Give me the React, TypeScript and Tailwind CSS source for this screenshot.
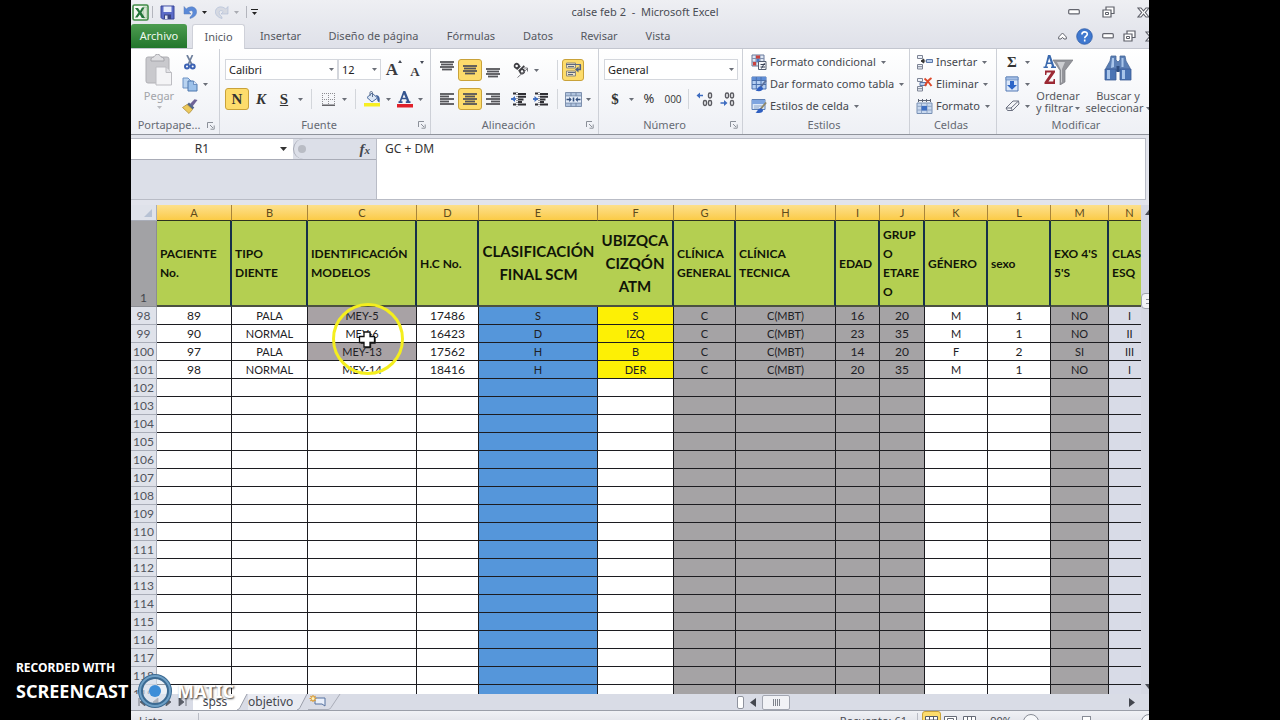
import React from "react";

type Kids = { children?: React.ReactNode };

/* ---------- small drawing helpers ---------- */

function Caret({ className = "text-[#6a6e77]" }: { className?: string }) {
  return (
    <svg width="5" height="3" viewBox="0 0 5 3" className={`shrink-0 ${className}`} aria-hidden="true">
      <path d="M0 0h5L2.500 3z" fill="currentColor" />
    </svg>
  );
}

function Sep() {
  return <span className="h-5 w-px shrink-0 bg-[#d3d6db]" />;
}

function Tool({ label, width = "w-[22px]", active = false, children }: Kids & { label: string; width?: string; active?: boolean }) {
  const look = active ? "rounded-[3px] border border-[#c9a23a] bg-[#fddc6c]" : "";
  return (
    <button type="button" aria-label={label} className={`flex h-[22px] shrink-0 items-center justify-center text-[#333] ${width} ${look}`}>
      {children}
    </button>
  );
}

/* Horizontal text lines for the alignment icons: [x, width] per line */
function Lines({ rows }: { rows: [number, number][] }) {
  const height = rows.length * 2.5;
  return (
    <svg width="14" height={Math.ceil(height)} viewBox={`0 0 14 ${Math.ceil(height)}`} aria-hidden="true">
      {rows.map(([x, w], i) => (
        <path key={i} d={`M${x} ${i * 2.5 + 1}h${w}`} stroke="#55555a" strokeWidth="1.800" />
      ))}
    </svg>
  );
}

function ExcelLogo() {
  return (
    <svg width="17" height="17" viewBox="0 0 17 17" aria-hidden="true">
      <rect x="1" y="1" width="15" height="15" rx="1.500" fill="#f4f8f2" stroke="#3f8a45" strokeWidth="1.600" />
      <path d="M11 3h4v11h-4z" fill="#d7e6d4" stroke="#7fae80" strokeWidth=".6" />
      <path d="M3 4h3l2 3 2-3.500h2.500L9.500 8.500 13 14h-3.200L7.800 10.500 5.500 13.500H3l3.400-5z" fill="#23743a" />
    </svg>
  );
}

function SaveIcon() {
  return (
    <svg width="15" height="15" viewBox="0 0 15 15" aria-hidden="true">
      <path d="M1 1h13v13H2.500L1 12.500z" fill="#5c6cc8" stroke="#3a4798" />
      <path d="M3.500 1.500h8v5.500h-8z" fill="#e8edfa" />
      <path d="M4 9.500h7v4.500H4z" fill="#3a4480" />
      <path d="M5 10.500h2.500v3.500H5z" fill="#e3e7f5" />
    </svg>
  );
}

function UndoIcon({ fill, flip = false }: { fill: string; flip?: boolean }) {
  return (
    <svg width="14" height="14" viewBox="0 0 14 14" className={flip ? "-scale-x-100" : ""} aria-hidden="true">
      <path d="M1 1.500v7.500h7L5.800 6.800C7.200 5.200 9.800 5.200 9.800 7.400c0 1.800-1.200 3.400-2.800 4.600v1.500c4-1 6.600-3.400 6.600-6.700C13.600 1.700 7 .2 3.300 4z" fill={fill} stroke="#5f7fb8" strokeWidth=".5" />
    </svg>
  );
}

function MinGlyph() {
  return (
    <svg width="12" height="6" viewBox="0 0 12 6" aria-hidden="true">
      <rect x=".7" y=".7" width="10.600" height="4.200" rx="1" fill="#fff" stroke="#63656e" strokeWidth="1.200" />
    </svg>
  );
}

function RestoreGlyph() {
  return (
    <svg width="13" height="12" viewBox="0 0 13 12" aria-hidden="true">
      <path d="M4 1h8v6.500H4z" fill="#fff" stroke="#5d5f68" strokeWidth="1.200" />
      <path d="M1 4h8v7H1z" fill="#fff" stroke="#5d5f68" strokeWidth="1.200" />
      <path d="M3.500 6.500h3v2h-3z" fill="none" stroke="#5d5f68" />
    </svg>
  );
}

function CloseGlyph() {
  return (
    <svg width="13" height="11" viewBox="0 0 13 11" aria-hidden="true">
      <path d="M1 1h3l2.500 2.800L9 1h3L8.300 5.500 12 10H9L6.500 7.200 4 10H1l3.700-4.500z" fill="#fff" stroke="#5d5f68" strokeWidth="1.100" />
    </svg>
  );
}

function HelpIcon() {
  return (
    <svg width="17" height="17" viewBox="0 0 17 17" aria-hidden="true">
      <circle cx="8.500" cy="8.500" r="7.800" fill="#3f78cf" stroke="#2f5da8" strokeWidth=".8" />
      <path d="M5.900 6.600c0-3.600 5.400-3.500 5.400-.3 0 1.900-2.600 1.900-2.600 4M8.700 11.600v1.800" fill="none" stroke="#fff" strokeWidth="1.600" />
    </svg>
  );
}

function PasteIcon() {
  return (
    <svg width="28" height="32" viewBox="0 0 28 32" aria-hidden="true">
      <rect x="1" y="3" width="23" height="26" rx="2" fill="#c9c9cd" stroke="#b0b0b5" />
      <path d="M6 5c0-2 3-1 4-3.500C11-.2 14-.2 15 1.500 16 4 19 3 19 5v2H6z" fill="#dedee1" stroke="#a6a6ab" />
      <path d="M11 13h10l5.500 5.500V31H11z" fill="#f4f4f6" stroke="#bcbcc1" />
      <path d="M21 13v5.500h5.500" fill="#e2e2e6" stroke="#bcbcc1" />
    </svg>
  );
}

function CutIcon() {
  return (
    <svg width="12" height="15" viewBox="0 0 12 15" aria-hidden="true">
      <path d="M3 0l4.800 9.500M8.500 0L4.200 9.500" stroke="#6e7f9c" strokeWidth="1.700" />
      <circle cx="3" cy="11.500" r="2" fill="none" stroke="#3c62b4" strokeWidth="2" />
      <circle cx="8.700" cy="11.500" r="2" fill="none" stroke="#3c62b4" strokeWidth="2" />
    </svg>
  );
}

function CopyIcon() {
  return (
    <svg width="16" height="15" viewBox="0 0 16 15" aria-hidden="true">
      <path d="M1 1h5l3 3v7H1z" fill="#b9d3f0" stroke="#6d92c4" />
      <path d="M6 4h5.500L15 7.500V14H6z" fill="#9cc1ea" stroke="#4d76ad" />
      <path d="M11.500 4v3.500H15" fill="#dfeafa" stroke="#4d76ad" strokeWidth=".7" />
    </svg>
  );
}

function BrushIcon() {
  return (
    <svg width="16" height="15" viewBox="0 0 16 15" aria-hidden="true">
      <path d="M15.500 1L12.500.2 8 5l2.500 2.500z" fill="#6f6398" />
      <path d="M7 3.500l5.300 5-1.800 2-5.600-5z" fill="#55678a" />
      <path d="M5 5.500L.5 8.500 7 14.500l3.500-4z" fill="#ecc95c" stroke="#b0903c" strokeWidth=".8" />
    </svg>
  );
}

function BorderIcon() {
  return (
    <svg width="13" height="13" viewBox="0 0 13 13" aria-hidden="true">
      <path d="M.5 0v12M6.500 0v12M12.500 0v12M0 .5h13M0 6.500h13" stroke="#8d8d92" strokeDasharray="1 1" />
      <path d="M0 12.200h13" stroke="#4a4a4e" strokeWidth="1.300" />
    </svg>
  );
}

function FillIcon() {
  return (
    <svg width="17" height="16" viewBox="0 0 17 16" aria-hidden="true">
      <path d="M3 6.500L8 2l5.500 5-5.500 4z" fill="#dbe6f5" stroke="#4b6c9e" />
      <path d="M6 5V1.500C6 .2 8.500.2 8.500 1.500V6" fill="none" stroke="#5b6f8f" />
      <path d="M11.500 4c4 0 4.800 3.500 4 7.500C13.500 11 12.700 8.500 13.500 7z" fill="#41629c" />
      <path d="M0 12h16v3.500H0z" fill="#f7ee22" />
    </svg>
  );
}

function FontColorIcon() {
  return (
    <svg width="17" height="17" viewBox="0 0 17 17" aria-hidden="true">
      <path d="M7.300 0h2l4.200 10.200h1V12H9.800v-1.800h1.100l-.7-2H6l-.8 2h1.300V12H2.500v-1.800h1zM8 3.200L6.600 6.700h3z" fill="#34548f" />
      <path d="M1 13h16v3.500H1z" fill="#e0202a" />
    </svg>
  );
}

function SizeIcon({ grow }: { grow: boolean }) {
  return (
    <span className="flex items-start font-['Liberation_Serif',serif] font-bold text-[#3b3b3f]">
      <span className={grow ? "text-[17px] leading-5" : "pt-1 text-[13px] leading-4"}>A</span>
      <svg width="4" height="4" viewBox="0 0 4 4" className={grow ? "" : "rotate-180"} aria-hidden="true">
        <path d="M0 3L2 0l2 3z" fill="#454a55" />
      </svg>
    </span>
  );
}

function OrientationIcon() {
  return (
    <svg width="17" height="16" viewBox="0 0 17 16" aria-hidden="true">
      <g transform="rotate(45 7 7)">
        <circle cx="3.200" cy="6.500" r="2.100" fill="none" stroke="#3f3f44" strokeWidth="1.700" />
        <path d="M5.700 4v5M8.500 1v8" stroke="#3f3f44" strokeWidth="1.700" />
        <circle cx="10.800" cy="6.500" r="2.100" fill="none" stroke="#3f3f44" strokeWidth="1.700" />
      </g>
      <path d="M5.500 15.500L15 7M15.500 6v3.500M15.500 6H12" stroke="#77777d" fill="none" />
    </svg>
  );
}

function WrapIcon() {
  return (
    <svg width="17" height="16" viewBox="0 0 17 16" aria-hidden="true">
      <path d="M1.500 1h9v5h-9zM1.500 9h9v5h-9z" fill="#ece3c8" stroke="#8f8a78" />
      <path d="M1 2.500h15M3 4.500h6M3 10.500h7M3 12.500h5" stroke="#5f6a80" strokeWidth="1.200" />
      <path d="M15.300 3v4.500H12" fill="none" stroke="#4d5f86" strokeWidth="1.600" />
      <path d="M13.500 4.500v6L10 7.500z" fill="#4d5f86" />
    </svg>
  );
}

function IndentIcon({ out = false }: { out?: boolean }) {
  return (
    <svg width="16" height="15" viewBox="0 0 16 15" aria-hidden="true">
      <path d="M2 1.500h3M7 2h8M7 4.800h8M7 7.500h5.500M7 10h4M7 12.500h8M2 12.500h3" stroke="#2f2f34" strokeWidth="2" />
      <path d="M6 0v14.500" stroke="#3f3f44" strokeDasharray="1 1" />
      <path d={out ? "M4 4v6L.5 7z" : "M1.500 4v6L5 7z"} fill="#3d6cc0" />
      <path d="M0 7h5" stroke="#3d6cc0" strokeWidth="1.800" />
    </svg>
  );
}

function MergeIcon() {
  return (
    <svg width="17" height="15" viewBox="0 0 17 15" aria-hidden="true">
      <path d="M.5.5h16v14H.5z" fill="#b0c3de" stroke="#7f91ae" />
      <path d="M.5 4h16M.5 11h16M6 .5V4M11 .5V4M6 11v3.500M11 11v3.500" stroke="#7588a6" />
      <path d="M1 4.500h15v6H1z" fill="#e6eefa" />
      <path d="M1.500 7.500h4M11.500 7.500h4" stroke="#35507e" strokeWidth="1.600" />
      <path d="M4.200 5v5l2.500-2.500zM12.800 5v5l-2.500-2.500z" fill="#35507e" />
      <path d="M8.500 5.500v4" stroke="#35507e" strokeWidth="1.600" />
    </svg>
  );
}

function DecimalsIcon({ more }: { more: boolean }) {
  return (
    <svg width="18" height="15" viewBox="0 0 18 15" aria-hidden="true">
      <g fill="none" stroke="#5a5a60" strokeWidth="1.400">
        {!more && <rect x="7.500" y="1" width="3" height="5" rx="1.400" />}
        <rect x="12.500" y="1" width="3" height="5" rx="1.400" />
        <rect x="12.500" y="8.500" width="3" height="5" rx="1.400" />
        {more && <rect x="7.500" y="8.500" width="3" height="5" rx="1.400" />}
      </g>
      {more ? (
        <path d="M.5 3.500L4 .5v2.200h3v1.600H4v2.200z" fill="#3d6cc0" />
      ) : (
        <path d="M9.500 11L6 8v2.200H2.500v1.600H6V14z" fill="#3d6cc0" />
      )}
    </svg>
  );
}

function ConditionalIcon() {
  return (
    <svg width="16" height="16" viewBox="0 0 16 16" aria-hidden="true">
      <path d="M1 1h12v11H1z" fill="#dfe6f3" stroke="#66789b" />
      <path d="M1 4.500h12M1 8h12M5 1v11M9 1v11" stroke="#8190ae" />
      <path d="M5 1.500h4v3H5zM2 8h3v3.500H2z" fill="#c9423f" />
      <path d="M5.500 5h3v3h-3z" fill="#4c78c8" />
      <path d="M7.500 7.500H15v8H7.500z" fill="#f5f7fb" stroke="#525c70" />
      <path d="M9.500 10.500h4.500M9.500 13h4.500M13.500 9l-3 5.500" stroke="#3b4458" />
    </svg>
  );
}

function TableFormatIcon() {
  return (
    <svg width="16" height="16" viewBox="0 0 16 16" aria-hidden="true">
      <path d="M1 1h14v12H1z" fill="#b5cff2" stroke="#4a70ad" />
      <path d="M1 1h14v3H1z" fill="#5f8ed6" />
      <path d="M1 4.500h14M1 8.500h14M5.300 1v12M10 1v12" stroke="#4a70ad" />
      <path d="M15.800 5L10 12l-1.500-1L14.500 4z" fill="#5b6f99" />
      <path d="M10 10.300c-3.200 0-3 3-5.500 4.200 3.500 1.500 8 .5 7.500-2.500z" fill="#2f5fc0" />
    </svg>
  );
}

function CellStyleIcon() {
  return (
    <svg width="16" height="16" viewBox="0 0 16 16" aria-hidden="true">
      <path d="M1 1.500h13v10H1z" fill="#dce8f8" stroke="#5d7fb4" />
      <path d="M1 2h13v4H1z" fill="#7fa5e0" />
      <path d="M3 8h8M3 10h5" stroke="#8ca6cc" />
      <path d="M15.800 5L10 12l-1.500-1L14.300 4z" fill="#8d8668" />
      <path d="M10 10.300c-3.200 0-3 3-5.500 4.200 3.500 1.200 8 .5 7.500-2.500z" fill="#2f5fc0" />
    </svg>
  );
}

function InsertCellsIcon() {
  return (
    <svg width="17" height="15" viewBox="0 0 17 15" aria-hidden="true">
      <path d="M1.500.5h5v3h-5zM1.500 9.500h5v4.500h-5zM1.500 11.700h5" fill="#eef2f9" stroke="#7c8394" />
      <path d="M10.500 4.500h6v3h-6z" fill="#bcd0ee" stroke="#5b77a8" />
      <path d="M9.500 6H6M7.800 4v4L5 6z" stroke="#333" strokeWidth="1" fill="#333" />
    </svg>
  );
}

function DeleteCellsIcon() {
  return (
    <svg width="17" height="15" viewBox="0 0 17 15" aria-hidden="true">
      <path d="M1.500 1.500h5v3h-5zM1.500 9.500h5v4.500h-5zM1.500 11.700h5" fill="#eef2f9" stroke="#7c8394" />
      <path d="M4 5.500h6v3H4z" fill="#bcd0ee" stroke="#5b77a8" />
      <path d="M8.500 1.500c2 1.500 5 4.500 7 7.500M15.500 1c-2.500 1.500-5 4.500-6.500 8" stroke="#dd4a2c" strokeWidth="2" fill="none" />
    </svg>
  );
}

function FormatCellsIcon() {
  return (
    <svg width="17" height="15" viewBox="0 0 17 15" aria-hidden="true">
      <path d="M2.500 0v3M2.500 1.500h12M14.500 0v3M6.500 0v3M10.500 0v3" stroke="#5c6475" fill="none" />
      <path d="M1 4h15v10.500H1z" fill="#c9d9ef" stroke="#7890b4" />
      <path d="M1 7.300h15M1 11h15M5.500 4v10.500M11 4v10.500" stroke="#8fa4c4" />
      <path d="M5.500 7h5.500v4.500H5.500z" fill="#3e6fc2" />
    </svg>
  );
}

function FillDownIcon() {
  return (
    <svg width="14" height="16" viewBox="0 0 14 16" aria-hidden="true">
      <path d="M1 1h12v14H1z" fill="#dbe7f9" stroke="#5278b4" />
      <path d="M1 1h12v3H1z" fill="#a5bfe6" stroke="#5278b4" strokeWidth=".6" />
      <path d="M5 5h4v4h3L7 13.800 2 9h3z" fill="#2d66c8" />
    </svg>
  );
}

function EraserIcon() {
  return (
    <svg width="15" height="12" viewBox="0 0 15 12" aria-hidden="true">
      <path d="M1 8l7-7h5.500L14 4l-6.500 6.500H2.500z" fill="#f3f4f7" stroke="#6b7080" />
      <path d="M1 8h5l7.500-7M6 8l1.500 2.500" fill="none" stroke="#6b7080" />
    </svg>
  );
}

function SortFilterIcon() {
  return (
    <svg width="30" height="30" viewBox="0 0 30 30" aria-hidden="true">
      <path d="M10 5h20l-8 10.500V27l-5 3V15.500z" fill="#94959b" stroke="#7a7b82" strokeWidth=".7" />
      <path d="M14 7h8l-3 7v13l-1 1V15z" fill="#cdced2" />
      <path d="M5 0h2.400l4 11.500H13V13H8v-1.500h1L8.200 9H4.400l-.8 2.500h1.300V13H.5v-1.500H2zM6.200 3L4.800 7.400h2.900z" fill="#3a69ae" />
      <path d="M2 15.500h10v1.800L5.500 26.500h4.700l.4-2.500H12v5H1.500v-1.800l6.700-9.700H3.700L3.300 20H2z" fill="#9c2934" />
    </svg>
  );
}

function BinocularsIcon() {
  return (
    <svg width="28" height="26" viewBox="0 0 28 26" aria-hidden="true">
      <path d="M7 1h5v4l2 2 2-2V1h5l1 5 4 7v3H2v-3l4-7z" fill="#5b7fb5" stroke="#47689b" strokeWidth=".8" />
      <path d="M1 14h11v11H1zM16 14h11v11H16z" fill="#4b74b4" stroke="#3a5c94" strokeWidth=".8" />
      <path d="M3 15h3v9H3zM18 15h3v9h-3zM8 3h2v9l-3 1zM17.500 3h2v9h-2z" fill="#a9c5ea" />
      <path d="M12.500 11h3v6h-3z" fill="#2f4f82" />
    </svg>
  );
}

function Launcher() {
  return (
    <svg width="8" height="8" viewBox="0 0 8 8" aria-hidden="true">
      <path d="M.5 6V.5H6M3 3l3 3M7.200 3.500v3.700H3.500" fill="none" stroke="#8b9099" />
    </svg>
  );
}

/* ---------- ribbon ---------- */

function Group({ title, width, launcher = true, children }: Kids & { title: string; width: string; launcher?: boolean }) {
  return (
    <section aria-label={title} className={`flex shrink-0 flex-col border-r border-[#cdd0d7] ${width}`}>
      <div className="flex-1">{children}</div>
      <div className="flex h-[18px] items-center pr-1 text-[#666a73]">
        <span className="flex-1 text-center">{title}</span>
        {launcher && (
          <button type="button" aria-label={`Opciones de ${title}`}>
            <Launcher />
          </button>
        )}
      </div>
    </section>
  );
}

function Combo({ label, value, width }: { label: string; value: string; width: string }) {
  return (
    <div className={`relative shrink-0 ${width}`}>
      <select aria-label={label} defaultValue={value} className="block h-[21px] w-full appearance-none border border-[#d4d7dd] bg-white pl-[3px] text-[11px] leading-[19px] text-[#222]">
        <option>{value}</option>
      </select>
      <span className="pointer-events-none absolute top-[9px] right-1">
        <Caret />
      </span>
    </div>
  );
}

function TextTool({ icon, text }: { icon: React.ReactNode; text: string }) {
  return (
    <button type="button" className="flex h-[22px] items-center gap-[3px] whitespace-nowrap text-[#44474e]">
      {icon}
      {text}
      <Caret className="ml-0.5 text-[#6a6e77]" />
    </button>
  );
}

const BLOCK: [number, number][] = [[0, 14], [1, 12], [0, 14], [2, 10]];
const LEFT: [number, number][] = [[0, 14], [0, 9], [0, 14], [0, 9], [0, 14]];
const CENTER: [number, number][] = [[0, 14], [2, 10], [0, 14], [2, 10], [0, 14]];
const RIGHT: [number, number][] = [[0, 14], [5, 9], [0, 14], [5, 9], [0, 14]];

function Ribbon() {
  return (
    <div className="flex h-[86px] shrink-0 border-b border-[#8f939b] bg-linear-to-b from-white to-[#eef0f5]">
      <Group title="Portapape..." width="w-[89px]">
        <div className="flex pt-0.5 pl-2">
          <button type="button" className="flex w-[40px] flex-col items-center pt-[3px] text-[#a2a4a9]">
            <PasteIcon />
            <span className="leading-5">Pegar</span>
            <Caret className="text-[#b9bbc0]" />
          </button>
          <div className="flex flex-col">
            <Tool label="Cortar"><CutIcon /></Tool>
            <div className="flex">
              <Tool label="Copiar"><CopyIcon /></Tool>
              <Tool label="Opciones de copiar" width="w-2"><Caret /></Tool>
            </div>
            <Tool label="Copiar formato"><BrushIcon /></Tool>
          </div>
        </div>
      </Group>

      <Group title="Fuente" width="w-[211px]">
        <div className="flex flex-col gap-2 pt-[10px] pl-[5px]">
          <div className="flex h-[21px] items-center">
            <Combo label="Fuente" value="Calibri" width="w-[113px]" />
            <Combo label="Tamaño de fuente" value="12" width="w-[43px]" />
            <Tool label="Aumentar tamaño" width="w-[26px]"><SizeIcon grow /></Tool>
            <Tool label="Disminuir tamaño" width="w-[20px]"><SizeIcon grow={false} /></Tool>
          </div>
          <div className="flex items-center font-['Liberation_Serif',serif] text-[15px] font-bold">
            <Tool label="Negrita" width="w-6" active>N</Tool>
            <Tool label="Cursiva" width="w-6"><i>K</i></Tool>
            <Tool label="Subrayado"><u>S</u></Tool>
            <Tool label="Opciones de subrayado" width="w-[10px]"><Caret /></Tool>
            <span className="w-[6px]" />
            <Sep />
            <span className="w-[5px]" />
            <Tool label="Bordes"><BorderIcon /></Tool>
            <Tool label="Opciones de bordes" width="w-[10px]"><Caret /></Tool>
            <span className="w-[6px]" />
            <Sep />
            <span className="w-[5px]" />
            <Tool label="Color de relleno"><FillIcon /></Tool>
            <Tool label="Opciones de relleno" width="w-[10px]"><Caret /></Tool>
            <Tool label="Color de fuente"><FontColorIcon /></Tool>
            <Tool label="Opciones de color" width="w-[10px]"><Caret /></Tool>
          </div>
        </div>
      </Group>

      <Group title="Alineación" width="w-[168px]">
        <div className="flex flex-col gap-[7px] pt-[10px] pl-[5px]">
          <div className="flex items-center">
            <Tool label="Alinear arriba"><span className="pb-2"><Lines rows={BLOCK} /></span></Tool>
            <Tool label="Alinear en medio" width="w-6" active><Lines rows={BLOCK} /></Tool>
            <Tool label="Alinear abajo"><span className="pt-[6px]"><Lines rows={BLOCK} /></span></Tool>
            <span className="w-1" />
            <Tool label="Orientación" width="w-6"><OrientationIcon /></Tool>
            <Tool label="Opciones de orientación" width="w-2"><Caret /></Tool>
            <span className="w-[17px]" />
            <Sep />
            <span className="w-1" />
            <Tool label="Ajustar texto" active><WrapIcon /></Tool>
          </div>
          <div className="flex items-center">
            <Tool label="Alinear a la izquierda"><Lines rows={LEFT} /></Tool>
            <Tool label="Centrar" width="w-6" active><Lines rows={CENTER} /></Tool>
            <Tool label="Alinear a la derecha"><Lines rows={RIGHT} /></Tool>
            <span className="w-1" />
            <Tool label="Disminuir sangría"><IndentIcon out /></Tool>
            <Tool label="Aumentar sangría"><IndentIcon /></Tool>
            <span className="w-[5px]" />
            <Sep />
            <span className="w-1" />
            <Tool label="Combinar y centrar"><MergeIcon /></Tool>
            <Tool label="Opciones de combinar" width="w-2"><Caret /></Tool>
          </div>
        </div>
      </Group>

      <Group title="Número" width="w-[144px]">
        <div className="flex flex-col gap-2 pt-[10px] pl-[5px]">
          <Combo label="Formato de número" value="General" width="w-[134px]" />
          <div className="flex items-center">
            <Tool label="Moneda"><b className="font-['Liberation_Serif',serif] text-[15px]">$</b></Tool>
            <Tool label="Opciones de moneda" width="w-[10px]"><Caret /></Tool>
            <Tool label="Porcentaje" width="w-[26px]"><span className="text-[13px]">%</span></Tool>
            <Tool label="Millares"><span className="font-['Open_Sans',sans-serif] text-[10px]">000</span></Tool>
            <span className="w-1" />
            <Sep />
            <span className="w-[5px]" />
            <Tool label="Aumentar decimales"><DecimalsIcon more /></Tool>
            <Tool label="Disminuir decimales"><DecimalsIcon more={false} /></Tool>
          </div>
        </div>
      </Group>

      <Group title="Estilos" width="w-[167px]" launcher={false}>
        <div className="flex flex-col pt-0.5 pl-2">
          <TextTool icon={<ConditionalIcon />} text="Formato condicional" />
          <TextTool icon={<TableFormatIcon />} text="Dar formato como tabla" />
          <TextTool icon={<CellStyleIcon />} text="Estilos de celda" />
        </div>
      </Group>

      <Group title="Celdas" width="w-[87px]" launcher={false}>
        <div className="flex flex-col pt-0.5 pl-[6px]">
          <TextTool icon={<InsertCellsIcon />} text="Insertar" />
          <TextTool icon={<DeleteCellsIcon />} text="Eliminar" />
          <TextTool icon={<FormatCellsIcon />} text="Formato" />
        </div>
      </Group>

      <Group title="Modificar" width="w-[163px]" launcher={false}>
        <div className="flex pt-0.5 pl-1">
          <div className="flex flex-col">
            <div className="flex">
              <Tool label="Autosuma"><b className="font-['Liberation_Serif',serif] text-[15px]">Σ</b></Tool>
              <Tool label="Opciones de autosuma" width="w-2"><Caret /></Tool>
            </div>
            <div className="flex">
              <Tool label="Rellenar"><FillDownIcon /></Tool>
              <Tool label="Opciones de rellenar" width="w-2"><Caret /></Tool>
            </div>
            <div className="flex">
              <Tool label="Borrar"><EraserIcon /></Tool>
              <Tool label="Opciones de borrar" width="w-2"><Caret /></Tool>
            </div>
          </div>
          <button type="button" className="flex w-[54px] flex-col items-center pt-1 leading-3 text-[#555860]">
            <SortFilterIcon />
            <span className="pt-[5px]">Ordenar</span>
            <span className="flex items-center gap-0.5 whitespace-nowrap">y filtrar <Caret /></span>
          </button>
          <button type="button" className="flex w-[66px] flex-col items-center pt-1 leading-3 text-[#555860]">
            <BinocularsIcon />
            <span className="pt-[9px]">Buscar y</span>
            <span className="flex items-center gap-0.5 whitespace-nowrap">seleccionar <Caret /></span>
          </button>
        </div>
      </Group>
    </div>
  );
}

/* ---------- title, tabs, formula bar ---------- */

const TABS: [string, string][] = [
  ["Insertar", "w-[65px]"],
  ["Diseño de página", "w-[121px]"],
  ["Fórmulas", "w-[74px]"],
  ["Datos", "w-[60px]"],
  ["Revisar", "w-[62px]"],
  ["Vista", "w-[56px]"],
];

function Header() {
  return (
    <header className="shrink-0 border-b border-[#c3c6cf] bg-linear-to-b from-[#eeeff3] to-[#dfe1e9]">
      <div className="flex h-6 items-center">
        <div className="flex flex-1 items-center pl-px">
          <ExcelLogo />
          <span className="mr-[7px] ml-[3px] h-3 w-px bg-[#b3b5bd]" />
          <button type="button" aria-label="Guardar"><SaveIcon /></button>
          <button type="button" aria-label="Deshacer" className="ml-2"><UndoIcon fill="#5b8ad8" /></button>
          <button type="button" aria-label="Opciones de deshacer" className="ml-[5px]"><Caret className="text-[#222]" /></button>
          <button type="button" aria-label="Rehacer" className="ml-2 opacity-50"><UndoIcon fill="#c2c8d4" flip /></button>
          <button type="button" aria-label="Opciones de rehacer" className="ml-[5px]"><Caret className="text-[#a9abb2]" /></button>
          <span className="mr-1 ml-[7px] h-3 w-px bg-[#b3b5bd]" />
          <button type="button" aria-label="Personalizar barra" className="flex flex-col items-center gap-0.5">
            <span className="h-px w-[7px] bg-[#222]" />
            <Caret className="text-[#222]" />
          </button>
        </div>
        <h1 className="whitespace-pre text-[#4a4d55]">calse feb 2  -  Microsoft Excel</h1>
        <div className="flex flex-1 items-center justify-end gap-[22px]">
          <button type="button" aria-label="Minimizar"><MinGlyph /></button>
          <button type="button" aria-label="Restaurar"><RestoreGlyph /></button>
          <button type="button" aria-label="Cerrar" className="mr-2"><CloseGlyph /></button>
        </div>
      </div>
      <nav className="flex h-6 items-end text-[#55585f]">
        <button type="button" className="h-6 w-14 rounded-t-[3px] bg-linear-to-b from-[#4c9c50] to-[#22762c] text-[#eef8ee]">Archivo</button>
        <button type="button" className="-mb-px ml-[5px] h-[25px] w-[53px] rounded-t-[3px] border border-b-0 border-[#cfd1d9] bg-white">Inicio</button>
        <span className="w-[3px]" />
        {TABS.map(([name, width]) => (
          <button key={name} type="button" className={`h-6 text-center whitespace-nowrap ${width}`}>{name}</button>
        ))}
        <div className="flex h-6 flex-1 items-center justify-end gap-[9px]">
          <button type="button" aria-label="Minimizar la cinta">
            <svg width="9" height="8" viewBox="0 0 9 8" aria-hidden="true">
              <path d="M.7 5L4.500 1l3.800 4v2H6L4.500 5.300 3 7H.7z" fill="#fff" stroke="#63656e" />
            </svg>
          </button>
          <button type="button" aria-label="Ayuda"><HelpIcon /></button>
          <button type="button" aria-label="Minimizar libro"><MinGlyph /></button>
          <button type="button" aria-label="Restaurar libro"><RestoreGlyph /></button>
          <button type="button" aria-label="Cerrar libro"><CloseGlyph /></button>
        </div>
      </nav>
    </header>
  );
}

function FormulaBar() {
  return (
    <div className="flex h-[70px] shrink-0 bg-[#e2e4ec] pt-[3px] pb-[5px]">
      <div className="flex w-[246px] shrink-0 flex-col border border-l-0 border-[#b9bcc6] bg-[#dcdfe8]">
        <div className="flex h-[21px] border-b border-[#a9acb7]">
          <input aria-label="Cuadro de nombres" defaultValue="R1" className="w-[142px] bg-white text-center text-[12px] text-[#333]" />
          <button type="button" aria-label="Lista de nombres" className="flex w-[20px] items-center justify-center bg-white">
            <svg width="7" height="4" viewBox="0 0 7 4" aria-hidden="true"><path d="M0 0h7L3.500 4z" fill="#333" /></svg>
          </button>
          <div className="flex flex-1 items-center justify-between rounded-l-full border-l border-[#a9acb7] pr-[6px] pl-1">
            <span className="size-2 rounded-full bg-[#b9bcc4]" />
            <button type="button" aria-label="Insertar función" className="font-['Liberation_Serif',serif] text-[15px] leading-4 font-bold text-[#44474e] italic">
              f<span className="text-[11px]">x</span>
            </button>
          </div>
        </div>
      </div>
      <textarea aria-label="Barra de fórmulas" defaultValue="GC + DM" className="min-w-0 flex-1 resize-none border-y border-[#b9bcc6] bg-white px-2 py-px text-[12px] leading-[18px] text-[#333]" />
      <div className="w-[13px] shrink-0 border-l border-[#b9bcc6]" />
    </div>
  );
}

/* ---------- spreadsheet ---------- */

const WHITE = "bg-white";
const GREY = "bg-[#a5a3a5]";
const BLUE = "bg-[#5596da]";
const PALE = "bg-[#d8dbe7]";

type Column = { id: string; col: string; title: string; fill: string; big?: boolean };

const COLUMNS: Column[] = [
  { id: "A", col: "w-[75px]", title: "PACIENTE\nNo.", fill: WHITE },
  { id: "B", col: "w-[76px]", title: "TIPO\nDIENTE", fill: WHITE },
  { id: "C", col: "w-[109px]", title: "IDENTIFICACIÓN\nMODELOS", fill: WHITE },
  { id: "D", col: "w-[62px]", title: "H.C No.", fill: WHITE },
  { id: "E", col: "w-[119px]", title: "CLASIFICACIÓN\nFINAL SCM", fill: BLUE, big: true },
  { id: "F", col: "w-[76px]", title: "UBIZQCA\nCIZQÓN\nATM", fill: WHITE, big: true },
  { id: "G", col: "w-[62px]", title: "CLÍNICA\nGENERAL", fill: GREY },
  { id: "H", col: "w-[100px]", title: "CLÍNICA\nTECNICA", fill: GREY },
  { id: "I", col: "w-[44px]", title: "EDAD", fill: GREY },
  { id: "J", col: "w-[45px]", title: "GRUP\nO\nETARE\nO", fill: GREY },
  { id: "K", col: "w-[63px]", title: "GÉNERO", fill: WHITE },
  { id: "L", col: "w-[63px]", title: "sexo", fill: WHITE },
  { id: "M", col: "w-[58px]", title: "EXO 4'S\n5'S", fill: GREY },
  { id: "N", col: "w-[42px]", title: "CLAS\nESQ", fill: PALE },
];

const DATA: Record<number, string[]> = {
  98: ["89", "PALA", "MEY-5", "17486", "S", "S", "C", "C(MBT)", "16", "20", "M", "1", "NO", "I"],
  99: ["90", "NORMAL", "MEY-6", "16423", "D", "IZQ", "C", "C(MBT)", "23", "35", "M", "1", "NO", "II"],
  100: ["97", "PALA", "MEY-13", "17562", "H", "B", "C", "C(MBT)", "14", "20", "F", "2", "SI", "III"],
  101: ["98", "NORMAL", "MEY-14", "18416", "H", "DER", "C", "C(MBT)", "20", "35", "M", "1", "NO", "I"],
};

const ROWS = Array.from({ length: 22 }, (_, i) => 98 + i);

function cellFill(row: number, column: Column) {
  if (column.id === "F" && DATA[row]) return "bg-[#fdf005]";
  if (column.id === "C" && (row === 98 || row === 100)) return "bg-[#a8a2a5]";
  return column.fill;
}

function textSize(value?: string) {
  return value && /^\d+$/.test(value) ? "text-[12px]" : "text-[11px]";
}

function Sheet() {
  return (
    <div className="flex min-h-0 flex-1">
      <div className="min-w-0 flex-1 overflow-hidden bg-[#d8dbe7] font-[Lato,sans-serif]">
        <table className="w-[1020px] table-fixed border-separate border-spacing-0 text-[12px] leading-[14px]">
          <colgroup>
            <col className="w-[26px]" />
            {COLUMNS.map((c) => (
              <col key={c.id} className={c.col} />
            ))}
          </colgroup>
          <thead>
            <tr>
              <th aria-label="Seleccionar todo" className="h-4 border-r border-b border-[#a9adb8] bg-[#dfe2ea] p-0">
                <svg width="8" height="8" viewBox="0 0 8 8" className="mr-1 ml-auto" aria-hidden="true">
                  <path d="M8 0v8H0z" fill="#b7c2d4" />
                </svg>
              </th>
              {COLUMNS.map((c) => (
                <th key={c.id} scope="col" className="h-4 border-r border-b border-r-[#a8843a] border-b-[#2d3320] bg-linear-to-b from-[#fde08a] to-[#fbcb45] p-0 text-[11px] font-normal text-[#5d4a1c]">
                  {c.id}
                </th>
              ))}
            </tr>
          </thead>
          <tbody>
            <tr>
              <th scope="row" className="h-[86px] border-r border-b border-[#8b8d93] bg-[#a2a2a5] p-0 pb-px align-bottom font-normal text-[#44464c]">1</th>
              {COLUMNS.map((c) => (
                <td
                  key={c.id}
                  className={`h-[86px] overflow-hidden border-b-2 border-b-[#4b5140] bg-[#b4cf51] p-0 font-bold whitespace-pre text-[#111508] ${
                    c.id === "E" ? "" : "border-r-2 border-r-[#16304a]"
                  } ${c.big ? "text-center text-[15px] leading-[23px]" : "pl-[3px] text-left text-[12px] leading-[19px]"}`}
                >
                  {c.title}
                </td>
              ))}
            </tr>
            {ROWS.map((row) => (
              <tr key={row}>
                <th scope="row" className="h-[18px] border-r border-b border-[#a9adb8] bg-[#dfe2ea] p-0 font-normal text-[#50545d]">{row}</th>
                {COLUMNS.map((c, i) => (
                  <td key={c.id} className={`h-[18px] border-r border-b border-[#1c1c20] p-0 text-center text-[#202024] ${cellFill(row, c)} ${textSize(DATA[row]?.[i])}`}>
                    {DATA[row]?.[i]}
                  </td>
                ))}
              </tr>
            ))}
          </tbody>
        </table>
      </div>
      <div className="flex w-[17px] shrink-0 flex-col items-center justify-between bg-[#d5d8e3] py-1">
        <button type="button" aria-label="Subir">
          <svg width="9" height="6" viewBox="0 0 9 6" aria-hidden="true"><path d="M0 6l4.500-6L9 6z" fill="#4b4e56" /></svg>
        </button>
        <button type="button" aria-label="Desplazar" className="mt-[78px] mb-auto h-4 w-[17px] rounded-sm border border-[#9fa3ae] bg-[#f2f3f7]">
          <span className="mx-auto block h-[5px] w-2 border-y border-[#8a8e98]" />
        </button>
        <button type="button" aria-label="Bajar">
          <svg width="9" height="6" viewBox="0 0 9 6" aria-hidden="true"><path d="M0 0h9L4.500 6z" fill="#4b4e56" /></svg>
        </button>
      </div>
    </div>
  );
}

function SheetTabs() {
  return (
    <div className="flex h-4 shrink-0 bg-[#d9dce6] text-[12px] leading-4 text-[#44474e]">
      <div className="flex w-[62px] items-center justify-around px-1">
        {["M2 0v8M8 0v8L3 4z", "M7 0v8L2 4z", "M2 0v8l5-4z", "M1 0v8l5-4zM8 0v8"].map((d) => (
          <button key={d} type="button" aria-label="Desplazar hojas">
            <svg width="9" height="8" viewBox="0 0 9 8" aria-hidden="true"><path d={d} fill="#5a5e68" stroke="#5a5e68" strokeWidth=".8" /></svg>
          </button>
        ))}
      </div>
      <button type="button" className="w-[44px] bg-white text-center">spss</button>
      <svg width="11" height="16" viewBox="0 0 11 16" aria-hidden="true">
        <path d="M0 0h10L3 13.500Q1.500 16 0 16z" fill="#fff" />
        <path d="M10 0L3 13.500Q1.500 16 0 16" fill="none" stroke="#9a9eaa" />
      </svg>
      <button type="button" className="bg-[#e9ebf2] text-center">objetivo</button>
      <svg width="15" height="16" viewBox="0 0 15 16" aria-hidden="true">
        <path d="M0 0h14L7 13.500Q5.500 16 4 16H0z" fill="#e9ebf2" />
        <path d="M14 0L7 13.500Q5.500 16 4 16" fill="none" stroke="#9a9eaa" />
      </svg>
      <button type="button" aria-label="Insertar hoja de cálculo" className="w-[34px]">
        <svg width="34" height="16" viewBox="0 0 34 16" aria-hidden="true">
          <path d="M0 15.500h20q2 0 3-2L32 0" fill="none" stroke="#a9adb8" />
          <path d="M7 4h10v8l-3-2H7z" fill="#e9effa" stroke="#54709f" />
          <path d="M5 1v7M1.500 4.500h7M2.500 2l5 5M7.500 2l-5 5" stroke="#dc9a2c" strokeWidth="1.200" />
          <circle cx="5" cy="4.500" r="1.500" fill="#fff4c0" />
        </svg>
      </button>
      <div className="flex-1" />
      <div className="flex w-[421px] items-center">
        <span className="h-[13px] w-[7px] rounded-[2px] border border-[#8f939e] bg-white" />
        <button type="button" aria-label="Desplazar a la izquierda" className="ml-[6px]">
          <svg width="6" height="9" viewBox="0 0 6 9" aria-hidden="true"><path d="M6 0v9L0 4.500z" fill="#44474f" /></svg>
        </button>
        <button type="button" aria-label="Barra horizontal" className="ml-[6px] flex h-[15px] w-[28px] items-center justify-center gap-px rounded-[2px] border border-[#a2a6b1] bg-[#f1f2f6]">
          {[0, 1, 2, 3].map((n) => (
            <span key={n} className="h-[7px] w-px bg-[#7e828c]" />
          ))}
        </button>
        <span className="flex-1" />
        <button type="button" aria-label="Desplazar a la derecha" className="mr-[23px]">
          <svg width="6" height="9" viewBox="0 0 6 9" aria-hidden="true"><path d="M0 0v9l6-4.500z" fill="#44474f" /></svg>
        </button>
      </div>
    </div>
  );
}

function StatusBar() {
  return (
    <footer className="flex h-[22px] shrink-0 items-center border-t border-[#9a9ea8] bg-linear-to-b from-[#f0f1f5] to-[#d7d9e1] text-[#4a4d55]">
      <span className="w-[68px] border-r border-[#b9bcc5] pl-2">Listo</span>
      <span className="flex-1" />
      <span className="border-r border-[#b9bcc5] pr-[10px]">Recuento: 61</span>
      <div className="flex items-center pl-1">
        <Tool label="Normal" width="w-[19px]" active>
          <svg width="13" height="12" viewBox="0 0 13 12" aria-hidden="true"><path d="M.5.5h12v11H.5zM.5 4h12M.5 8h12M4.500.5v11M8.500.5v11" fill="#fff" stroke="#555a66" /></svg>
        </Tool>
        <Tool label="Diseño de página" width="w-[19px]">
          <svg width="13" height="12" viewBox="0 0 13 12" aria-hidden="true"><path d="M.5.5h12v11H.5zM3.500 2.500h6v7h-6z" fill="#fff" stroke="#666b77" /></svg>
        </Tool>
        <Tool label="Ver salto de página" width="w-[19px]">
          <svg width="13" height="12" viewBox="0 0 13 12" aria-hidden="true"><path d="M.5.5h12v11H.5zM4.500.5v6M8.500.5v6" fill="#fff" stroke="#666b77" /></svg>
        </Tool>
      </div>
      <span className="w-[44px] text-center">90%</span>
      <button type="button" aria-label="Alejar" className="size-4 rounded-full border border-[#888c96] bg-[#f7f8fa] leading-3">−</button>
      <input type="range" aria-label="Zoom" min={0} max={100} defaultValue={46} className="h-3 w-[102px] appearance-none bg-transparent [&::-webkit-slider-thumb]:h-3 [&::-webkit-slider-thumb]:w-[9px] [&::-webkit-slider-thumb]:appearance-none [&::-webkit-slider-thumb]:border [&::-webkit-slider-thumb]:border-[#888c96] [&::-webkit-slider-thumb]:bg-white" />
      <button type="button" aria-label="Acercar" className="mr-px size-4 rounded-full border border-[#888c96] bg-[#f7f8fa] leading-3">+</button>
    </footer>
  );
}

/* ---------- overlays ---------- */

function PointerHalo() {
  return (
    <svg width="74" height="74" viewBox="0 0 74 74" className="pointer-events-none absolute top-[303px] left-[331px]" aria-hidden="true">
      <circle cx="37" cy="36" r="34.500" fill="none" stroke="#f4ee1e" strokeWidth="3" />
      <path d="M33 29h6v4.500h4.500v6H39V44h-6v-4.500h-4.500v-6H33z" fill="#222" transform="translate(1.200 1.200)" />
      <path d="M33 29h6v4.500h4.500v6H39V44h-6v-4.500h-4.500v-6H33z" fill="#fff" stroke="#111" strokeWidth="1.300" />
    </svg>
  );
}

function Watermark() {
  return (
    <div className="pointer-events-none absolute bottom-[11px] left-4 font-['Noto_Sans',sans-serif] font-bold text-white">
      <p className="-mb-[3px] text-[12px] leading-4">RECORDED WITH</p>
      <div className="flex items-center text-[18px] leading-8 text-shadow-[1px_1px_2px_rgb(0_0_0_/_0.8)]">
        <span className="w-[121px]">SCREENCAST</span>
        <svg width="36" height="36" viewBox="0 0 36 36" aria-hidden="true">
          <circle cx="18" cy="18" r="14.500" fill="#dfe8f2" fillOpacity=".6" stroke="#3b6a92" strokeWidth="5" />
          <circle cx="18" cy="18" r="15" fill="none" stroke="#6fa0c6" strokeWidth="2" />
          <circle cx="18" cy="18" r="6" fill="#3d8ed8" />
        </svg>
        <span className="ml-1">MATIC</span>
      </div>
    </div>
  );
}

export default function App() {
  return (
    <div className="relative h-screen overflow-hidden bg-black px-[131px] font-['Noto_Sans',sans-serif] text-[11px]">
      <main className="h-full overflow-hidden">
        <div className="flex h-[calc(100%+12px)] w-[calc(100%+9px)] flex-col bg-[#e2e4ec]">
          <Header />
          <Ribbon />
          <FormulaBar />
          <Sheet />
          <SheetTabs />
          <StatusBar />
        </div>
      </main>
      <PointerHalo />
      <Watermark />
    </div>
  );
}
